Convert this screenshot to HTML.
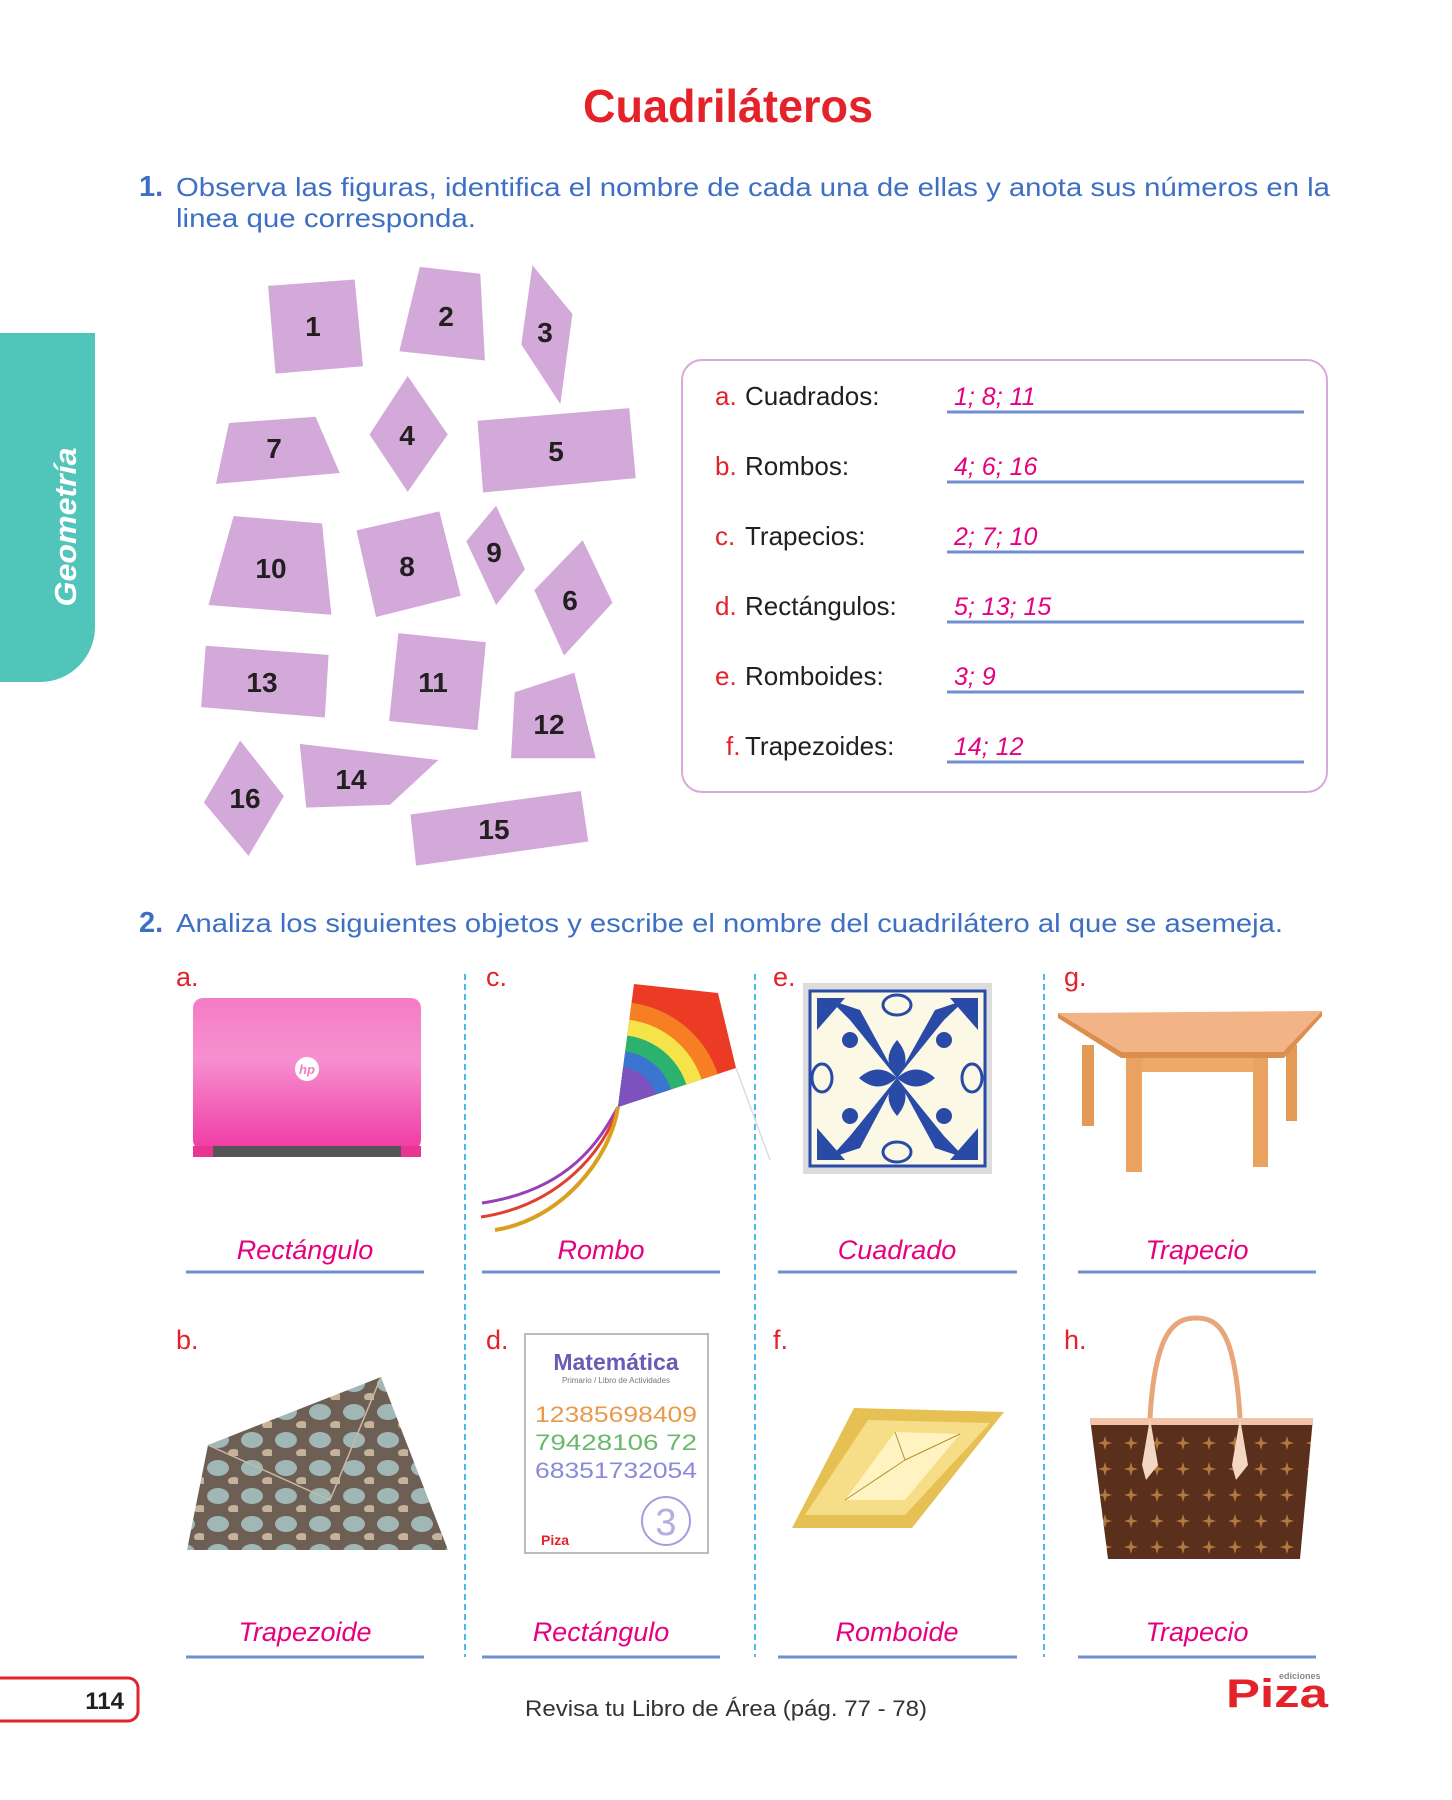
<!DOCTYPE html>
<html><head><meta charset="utf-8"><style>
html,body{margin:0;padding:0;background:#fff;}
svg{display:block;}
text{font-family:"Liberation Sans",sans-serif;}
</style></head><body>
<svg width="1452" height="1800" viewBox="0 0 1452 1800" xmlns="http://www.w3.org/2000/svg">
<!-- sidebar -->
<path d="M0 333 H95 V627 A55 55 0 0 1 40 682 H0 Z" fill="#52c5bb"/>
<text x="0" y="0" transform="translate(76,527) rotate(-90)" text-anchor="middle" font-size="31" font-weight="bold" font-style="italic" fill="#fff" textLength="159" lengthAdjust="spacingAndGlyphs">Geometría</text>

<!-- title -->
<text x="728" y="122" text-anchor="middle" font-size="46" font-weight="bold" fill="#e3222a" textLength="290" lengthAdjust="spacingAndGlyphs">Cuadriláteros</text>

<!-- instruction 1 -->
<text x="139" y="196" font-size="29" font-weight="bold" fill="#3d6fc4">1.</text>
<text x="176" y="196" font-size="26" fill="#3d6fc4" textLength="1154" lengthAdjust="spacingAndGlyphs">Observa las figuras, identifica el nombre de cada una de ellas y anota sus números en la</text>
<text x="176" y="227" font-size="26" fill="#3d6fc4" textLength="300" lengthAdjust="spacingAndGlyphs">linea que corresponda.</text>

<!-- shapes -->
<g transform="scale(0.9308,0.574)" fill="#d3a9da">
<polygon points="288,498 381,487 390,638 296,651"/>
<polygon points="451,465 516,477 521,628 429,612"/>
<polygon points="572,462 615,547 602,704 560,600"/>
<polygon points="246,737 339,726 365,824 232,843"/>
<polygon points="438,655 481,757 438,857 397,757"/>
<polygon points="513,733 676,711 683,833 519,858"/>
<polygon points="251,899 346,912 356,1071 224,1054"/>
<polygon points="383,924 472,891 495,1038 404,1075"/>
<polygon points="533,881 564,992 533,1054 501,943"/>
<polygon points="626,941 658,1050 606,1142 574,1028"/>
<polygon points="221,1125 353,1141 349,1250 216,1232"/>
<polygon points="428,1103 522,1119 513,1272 418,1256"/>
<polygon points="617,1172 640,1321 549,1321 553,1206"/>
<polygon points="258,1290 305,1387 267,1491 219,1398"/>
<polygon points="322,1296 471,1324 419,1402 329,1407"/>
<polygon points="441,1419 624,1378 632,1466 447,1508"/>
</g>
<g font-size="28" font-weight="bold" fill="#231f20" text-anchor="middle">
<text x="313" y="336">1</text><text x="446" y="326">2</text><text x="545" y="342">3</text>
<text x="274" y="458">7</text><text x="407" y="445">4</text><text x="556" y="461">5</text>
<text x="271" y="578">10</text><text x="407" y="576">8</text><text x="494" y="562">9</text>
<text x="570" y="610">6</text><text x="262" y="692">13</text><text x="433" y="692">11</text>
<text x="549" y="734">12</text><text x="245" y="808">16</text><text x="351" y="789">14</text>
<text x="494" y="839">15</text>
</g>

<!-- answer box -->
<rect x="682" y="360" width="645" height="432" rx="20" fill="none" stroke="#d9a9dd" stroke-width="2"/>
<g font-size="26">
<g fill="#e3222a"><text x="715" y="405">a.</text><text x="715" y="475">b.</text><text x="715" y="545">c.</text><text x="715" y="615">d.</text><text x="715" y="685">e.</text><text x="726" y="755">f.</text></g>
<g fill="#231f20"><text x="745" y="405">Cuadrados:</text><text x="745" y="475">Rombos:</text><text x="745" y="545">Trapecios:</text><text x="745" y="615">Rectángulos:</text><text x="745" y="685">Romboides:</text><text x="745" y="755">Trapezoides:</text></g>
<g fill="#e6007e" font-style="italic" font-size="25"><text x="954" y="405">1; 8; 11</text><text x="954" y="475">4; 6; 16</text><text x="954" y="545">2; 7; 10</text><text x="954" y="615">5; 13; 15</text><text x="954" y="685">3; 9</text><text x="954" y="755">14; 12</text></g>
</g>
<g stroke="#6f8fd0" stroke-width="3">
<line x1="947" y1="412" x2="1304" y2="412"/><line x1="947" y1="482" x2="1304" y2="482"/><line x1="947" y1="552" x2="1304" y2="552"/>
<line x1="947" y1="622" x2="1304" y2="622"/><line x1="947" y1="692" x2="1304" y2="692"/><line x1="947" y1="762" x2="1304" y2="762"/>
</g>

<!-- instruction 2 -->
<text x="139" y="932" font-size="29" font-weight="bold" fill="#3d6fc4">2.</text>
<text x="176" y="932" font-size="26" fill="#3d6fc4" textLength="1107" lengthAdjust="spacingAndGlyphs">Analiza los siguientes objetos y escribe el nombre del cuadrilátero al que se asemeja.</text>

<!-- separators -->
<g stroke="#4fb8ea" stroke-width="2" stroke-dasharray="6,4">
<line x1="465" y1="974" x2="465" y2="1657"/><line x1="755" y1="974" x2="755" y2="1657"/><line x1="1044" y1="974" x2="1044" y2="1657"/>
</g>
<!-- letters -->
<g font-size="27" fill="#e3222a">
<text x="176" y="986">a.</text><text x="486" y="986">c.</text><text x="773" y="986">e.</text><text x="1064" y="986">g.</text>
<text x="176" y="1349">b.</text><text x="486" y="1349">d.</text><text x="773" y="1349">f.</text><text x="1064" y="1349">h.</text>
</g>
<!-- answers -->
<g font-size="27" font-style="italic" fill="#e6007e" text-anchor="middle">
<text x="305" y="1259">Rectángulo</text><text x="601" y="1259">Rombo</text><text x="897" y="1259">Cuadrado</text><text x="1197" y="1259">Trapecio</text>
<text x="305" y="1641">Trapezoide</text><text x="601" y="1641">Rectángulo</text><text x="897" y="1641">Romboide</text><text x="1197" y="1641">Trapecio</text>
</g>
<g stroke="#6f8fd0" stroke-width="3">
<line x1="186" y1="1272" x2="424" y2="1272"/><line x1="482" y1="1272" x2="720" y2="1272"/><line x1="778" y1="1272" x2="1017" y2="1272"/><line x1="1078" y1="1272" x2="1316" y2="1272"/>
<line x1="186" y1="1657" x2="424" y2="1657"/><line x1="482" y1="1657" x2="720" y2="1657"/><line x1="778" y1="1657" x2="1017" y2="1657"/><line x1="1078" y1="1657" x2="1316" y2="1657"/>
</g>

<defs>
<linearGradient id="lp" x1="0" y1="0" x2="0" y2="1"><stop offset="0" stop-color="#f47cc4"/><stop offset="0.4" stop-color="#f68fcf"/><stop offset="1" stop-color="#f03ba4"/></linearGradient>
<pattern id="snake" width="34" height="28" patternUnits="userSpaceOnUse"><rect width="34" height="28" fill="#6e5f55"/><ellipse cx="14" cy="12" rx="11" ry="8" fill="#9fb7b5"/><ellipse cx="30" cy="25" rx="6" ry="4" fill="#c4b39a"/></pattern>
<pattern id="lv" width="26" height="26" patternUnits="userSpaceOnUse"><rect width="26" height="26" fill="#5a2f1c"/><path d="M13 6 L15 13 L13 20 L11 13 Z M6 13 L13 11 L20 13 L13 15 Z" fill="#b27a3f"/></pattern>
</defs>

<!-- laptop -->
<rect x="193" y="998" width="228" height="152" rx="10" fill="url(#lp)"/>
<rect x="200" y="1146" width="216" height="11" fill="#555"/>
<rect x="193" y="1146" width="20" height="11" fill="#e83592"/><rect x="401" y="1146" width="20" height="11" fill="#e83592"/>
<circle cx="307" cy="1069" r="12" fill="#fff"/><text x="307" y="1074" text-anchor="middle" font-size="13" font-style="italic" font-weight="bold" fill="#f27dc3">hp</text>

<!-- kite -->
<path d="M618 1107 C600 1140 570 1190 482 1203" stroke="#9a3fb8" stroke-width="3" fill="none"/>
<path d="M618 1107 C605 1150 560 1205 481 1217" stroke="#e04030" stroke-width="3" fill="none"/>
<path d="M618 1107 C610 1160 560 1220 495 1230" stroke="#d9a020" stroke-width="4" fill="none"/>
<line x1="736" y1="1068" x2="770" y2="1160" stroke="#ddd" stroke-width="1.5"/>
<clipPath id="kc"><polygon points="634,984 718,993 736,1068 618,1107"/></clipPath>
<g clip-path="url(#kc)">
<rect x="600" y="970" width="150" height="150" fill="#ec3b25"/>
<circle cx="618" cy="1107" r="105" fill="#f57f22"/>
<circle cx="618" cy="1107" r="88" fill="#f4e44a"/>
<circle cx="618" cy="1107" r="72" fill="#2ab26e"/>
<circle cx="618" cy="1107" r="56" fill="#3a75d0"/>
<circle cx="618" cy="1107" r="40" fill="#7d52bf"/>
</g>

<!-- tile -->
<rect x="803" y="983" width="189" height="191" fill="#dcdcdc"/>
<rect x="810" y="991" width="175" height="175" fill="#fbf8e6" stroke="#2a4aa8" stroke-width="3"/>
<g fill="#2a4aa8">
<path d="M897 1078 L850 1020 L830 1000 L860 1010 Z M897 1078 L944 1020 L965 1000 L935 1010 Z M897 1078 L850 1136 L830 1158 L860 1148 Z M897 1078 L944 1136 L965 1158 L935 1148 Z"/>
<path d="M897 1040 Q880 1060 897 1078 Q914 1060 897 1040Z M897 1116 Q880 1096 897 1078 Q914 1096 897 1116Z M859 1078 Q878 1061 897 1078 Q878 1095 859 1078Z M935 1078 Q916 1061 897 1078 Q916 1095 935 1078Z"/>
<circle cx="850" cy="1040" r="8"/><circle cx="944" cy="1040" r="8"/><circle cx="850" cy="1116" r="8"/><circle cx="944" cy="1116" r="8"/>
<path d="M817 998 L845 998 L817 1030Z M978 998 L950 998 L978 1030Z M817 1160 L845 1160 L817 1128Z M978 1160 L950 1160 L978 1128Z"/>
<ellipse cx="897" cy="1005" rx="14" ry="10" fill="none" stroke="#2a4aa8" stroke-width="3"/><ellipse cx="897" cy="1152" rx="14" ry="10" fill="none" stroke="#2a4aa8" stroke-width="3"/>
<ellipse cx="822" cy="1078" rx="10" ry="14" fill="none" stroke="#2a4aa8" stroke-width="3"/><ellipse cx="972" cy="1078" rx="10" ry="14" fill="none" stroke="#2a4aa8" stroke-width="3"/>
</g>

<!-- table -->
<rect x="1082" y="1045" width="12" height="81" fill="#e49a55"/><rect x="1286" y="1045" width="11" height="76" fill="#e49a55"/>
<polygon points="1058,1013 1322,1011 1283,1052 1122,1052" fill="#f2b487"/>
<polygon points="1058,1013 1122,1052 1283,1052 1322,1011 1322,1016 1284,1058 1121,1058 1058,1018" fill="#dc8e4e"/>
<rect x="1142" y="1058" width="111" height="14" fill="#eea86a"/>
<rect x="1126" y="1058" width="16" height="114" fill="#eaa260"/><rect x="1253" y="1058" width="15" height="109" fill="#eaa260"/>

<!-- clutch -->
<polygon points="208,1445 381,1377 448,1550 187,1550" fill="url(#snake)"/>
<polyline points="208,1445 330,1500 381,1377" fill="none" stroke="#c9b8a2" stroke-width="1.5"/>

<!-- book -->
<rect x="525" y="1334" width="183" height="219" fill="#fff" stroke="#bbb" stroke-width="2"/>
<text x="616" y="1370" text-anchor="middle" font-size="23" fill="#6a5bb5" font-weight="bold">Matemática</text>
<text x="616" y="1383" text-anchor="middle" font-size="8" fill="#777">Primario / Libro de Actividades</text>
<text x="535" y="1422" font-size="22" fill="#e89a4a" textLength="162" lengthAdjust="spacingAndGlyphs">12385698409</text>
<text x="535" y="1450" font-size="22" fill="#6ab86a" textLength="162" lengthAdjust="spacingAndGlyphs">79428106 72</text>
<text x="535" y="1478" font-size="22" fill="#8a8ad8" textLength="162" lengthAdjust="spacingAndGlyphs">68351732054</text>
<circle cx="666" cy="1521" r="24" fill="none" stroke="#a99be0" stroke-width="2"/>
<text x="666" y="1535" text-anchor="middle" font-size="38" fill="#b5acdf">3</text>
<text x="541" y="1545" font-size="14" font-weight="bold" fill="#e3222a">Piza</text>

<!-- gold -->
<polygon points="854,1408 1004,1412 912,1528 792,1528" fill="#e6c052"/>
<polygon points="868,1420 990,1423 905,1515 805,1515" fill="#f6dd87"/>
<polygon points="895,1432 960,1434 905,1500 845,1500" fill="#fff3c2"/>
<polyline points="895,1432 905,1460 960,1434 905,1460 845,1500" stroke="#b59030" fill="none"/>

<!-- bag -->
<path d="M1150 1418 C1155 1330 1175 1318 1196 1318 C1218 1318 1235 1330 1240 1418" stroke="#e8a77a" stroke-width="5" fill="none"/>
<polygon points="1090,1418 1313,1418 1300,1559 1108,1559" fill="url(#lv)"/>
<rect x="1090" y="1418" width="223" height="7" fill="#f2c3a8"/>
<path d="M1150 1418 L1158 1465 L1146 1480 L1142 1465 Z M1240 1418 L1248 1465 L1236 1480 L1232 1465 Z" fill="#f3d7c2"/>

<!-- footer -->
<path d="M0 1678 H128 A10 10 0 0 1 138 1688 V1711 A10 10 0 0 1 128 1721 H0" fill="none" stroke="#e3222a" stroke-width="3"/>
<text x="124" y="1709" text-anchor="end" font-size="24" font-weight="bold" fill="#231f20">114</text>
<text x="726" y="1716" text-anchor="middle" font-size="22" fill="#333" textLength="402" lengthAdjust="spacingAndGlyphs">Revisa tu Libro de Área (pág. 77 - 78)</text>
<text x="1279" y="1679" font-size="9" font-weight="bold" fill="#888">ediciones</text>
<text x="1226" y="1707" font-size="40" font-weight="bold" fill="#e3222a" textLength="102" lengthAdjust="spacingAndGlyphs">Piza</text>
</svg>
</body></html>
